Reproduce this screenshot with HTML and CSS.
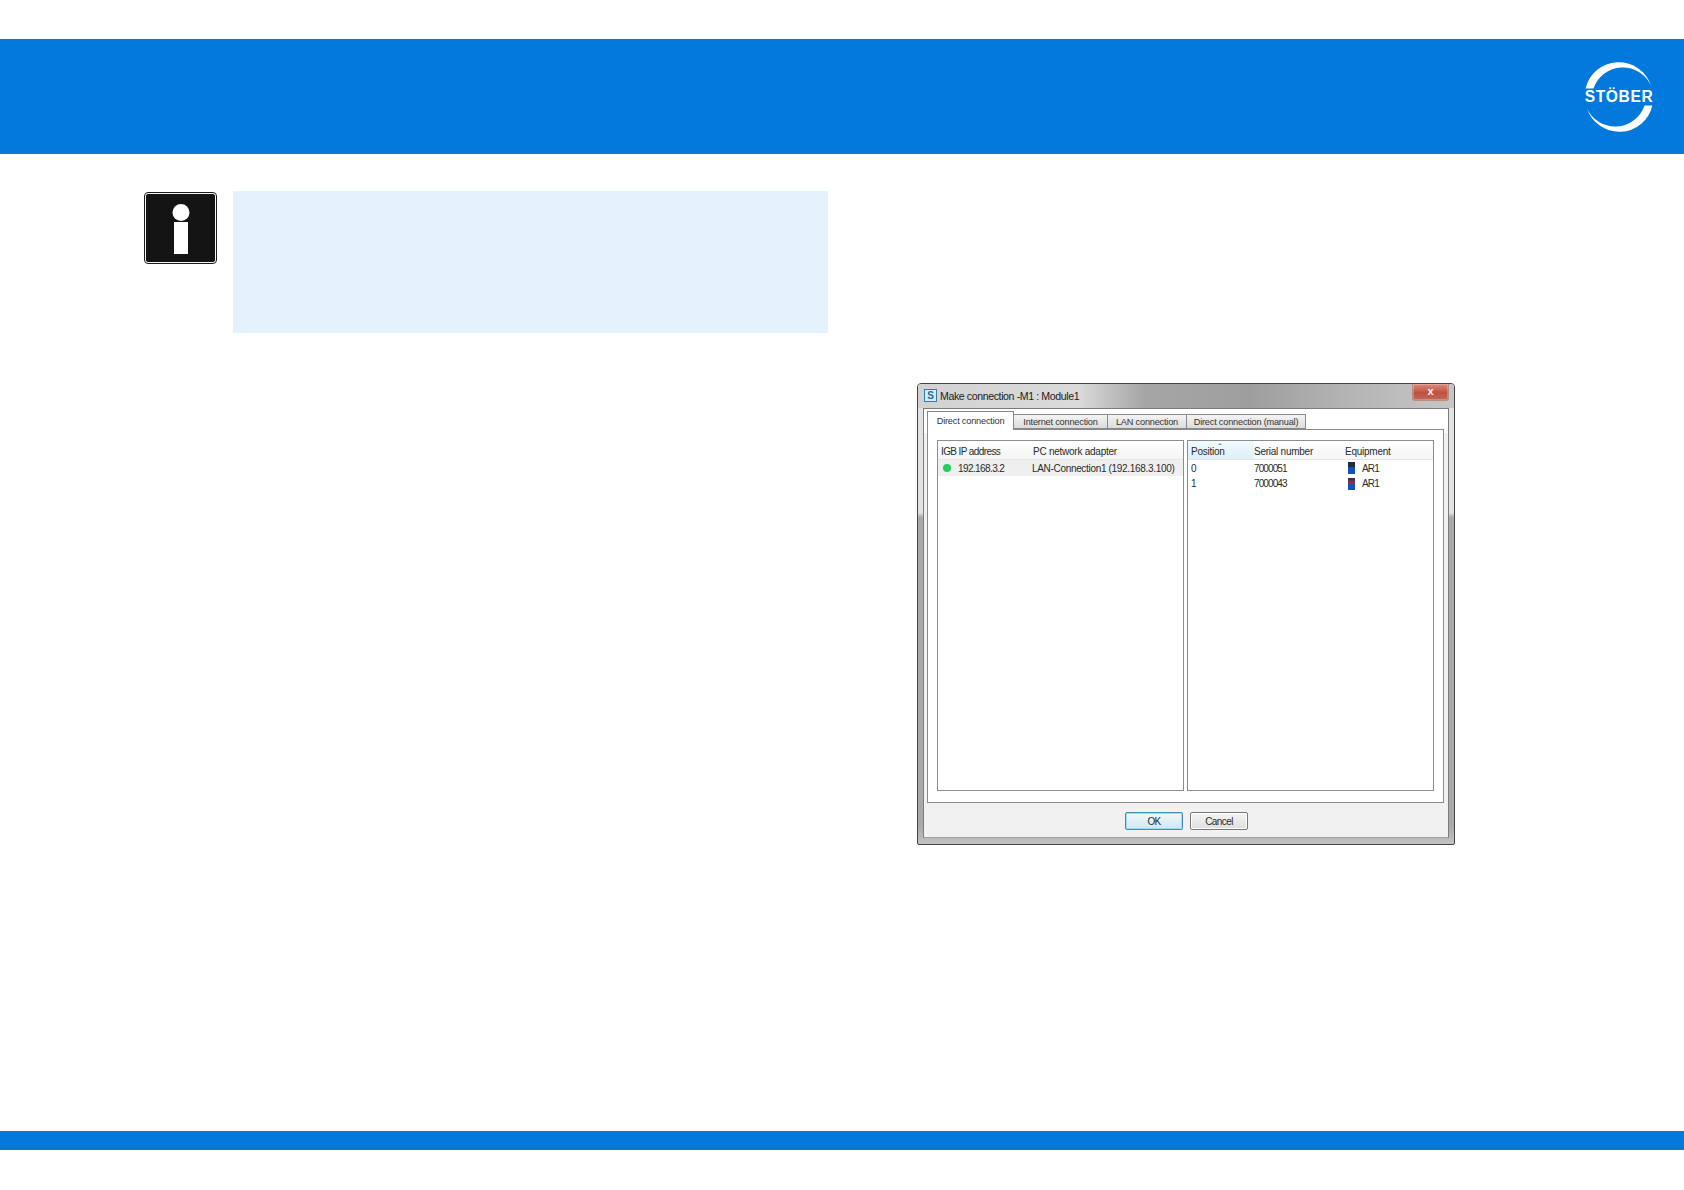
FILE: index.html
```html
<!DOCTYPE html>
<html lang="en">
<head>
<meta charset="utf-8">
<title>Make connection</title>
<link rel="stylesheet" href="styles.css">
</head>
<body>
<div class="page">
  <header class="header">
    <svg class="logo" viewBox="0 0 80 80" width="80" height="80" aria-label="STÖBER logo">
      <path class="logo-arc" d="M6.6 31.5 A34 34 0 0 1 72 28.5 A31 31 0 0 0 14.5 31.5 Z"/>
      <path class="logo-arc" d="M73.4 48.5 A34 34 0 0 1 8 51.5 A31 31 0 0 0 65.5 48.5 Z"/>
      <text class="logo-text" x="40" y="44.5" text-anchor="middle">STÖBER</text>
    </svg>
  </header>
  <main class="main">
    <section class="left">
      <div class="info-icon">
        <svg viewBox="0 0 73 72" width="73" height="72">
          <rect class="info-outer" x="0.5" y="0.5" width="72" height="71" rx="3.5"/>
          <rect class="info-ring" x="2.5" y="2.5" width="68" height="67" rx="1.5"/>
          <circle class="info-glyph" cx="37" cy="20.5" r="8.5"/>
          <rect class="info-glyph" x="30" y="30" width="14" height="32"/>
        </svg>
      </div>
      <div class="note"></div>
    </section>
    <section class="right">
      <div class="dialog">
        <div class="titlebar">
          <span class="app-icon">S</span>
          <span class="title">Make connection -M1 : Module1</span>
          <span class="close">x</span>
        </div>
        <div class="client">
          <div class="tabs">
            <span class="tab tab-active">Direct connection</span>
            <span class="tab tab-internet">Internet connection</span>
            <span class="tab tab-lan">LAN connection</span>
            <span class="tab tab-manual">Direct connection (manual)</span>
          </div>
          <div class="panel">
            <div class="list">
              <div class="row head">
                <span class="c-ip head-ip">IGB IP address</span>
                <span>PC network adapter</span>
              </div>
              <div class="row selected">
                <span class="c-ip"><i class="dot"></i><span class="ip">192.168.3.2</span></span>
                <span class="adapter">LAN-Connection1 (192.168.3.100)</span>
              </div>
            </div>
            <div class="list">
              <div class="row head">
                <span class="c-pos sorted">Position</span>
                <span class="c-serial">Serial number</span>
                <span>Equipment</span>
              </div>
              <div class="row">
                <span class="c-pos">0</span>
                <span class="c-serial digits">7000051</span>
                <span class="equip"><i class="module"></i>AR1</span>
              </div>
              <div class="row row-tight">
                <span class="c-pos">1</span>
                <span class="c-serial digits">7000043</span>
                <span class="equip"><i class="module module-red"></i>AR1</span>
              </div>
            </div>
          </div>
          <div class="buttons">
            <span class="btn btn-default">OK</span>
            <span class="btn">Cancel</span>
          </div>
        </div>
      </div>
    </section>
  </main>
  <footer class="footer"></footer>
</div>
</body>
</html>
```
FILE: styles.css
```css
* { box-sizing: border-box; }
html, body { margin: 0; padding: 0; background: #fff; }
.page {
  width: 1684px;
  height: 1190px;
  display: flex;
  flex-direction: column;
  padding: 39px 0 40px;
  overflow: hidden;
  font-family: "Liberation Sans", Arial, sans-serif;
}
.header {
  height: 115px;
  background: #0078dc;
  display: flex;
  align-items: center;
  justify-content: flex-end;
  padding: 0 25px 0 0;
  flex: none;
}
.logo { display: block; }
.logo-arc { fill: #fff; }
.logo-text {
  fill: #fff;
  font: 700 15.6px "Liberation Sans", sans-serif;
  letter-spacing: .6px;
}
.main { flex: 1; display: flex; padding: 37px 0 0 144px; }
.footer { height: 19px; background: #0078dc; flex: none; }

.left { width: 684px; display: flex; gap: 16px; align-items: flex-start; flex: none; }
.info-icon { width: 73px; height: 72px; margin-top: 1px; flex: none; }
.info-icon svg { display: block; }
.info-outer { fill: #f4f4f4; stroke: #1c1c1c; stroke-width: 1; }
.info-ring { fill: #141414; stroke: #141414; stroke-width: 1; }
.info-glyph { fill: #fff; }
.note { width: 595px; height: 142px; background: #e5f1fc; }

.right { margin-left: 89px; padding-top: 192px; }
.dialog {
  width: 538px;
  height: 462px;
  display: flex;
  flex-direction: column;
  padding: 0 5px 6px;
  border: 1px solid #444;
  border-radius: 4px 4px 2px 2px;
  background: linear-gradient(180deg, #e2e2e2 0, #e2e2e2 28%, #a9a9a9 29%, #a9a9a9 96%, #c2c2c2 100%);
  font-size: 10px;
  color: #2a2a2a;
}
.titlebar {
  height: 24px;
  margin: 0 -5px;
  padding: 0 5px 0 6px;
  display: flex;
  align-items: flex-start;
  gap: 3px;
  flex: none;
  border-radius: 3px 3px 0 0;
  background: linear-gradient(90deg, #d2d2d2 0, #dadada 30%, #a6a6a6 42%, #9e9e9e 62%, #b4b4b4 80%, #c6c6c6 100%);
}
.app-icon {
  width: 13px;
  height: 13px;
  margin-top: 5px;
  border: 1px solid #2a7fb0;
  background: #d6edf8;
  color: #1b6d9c;
  font-size: 10px;
  line-height: 11px;
  text-align: center;
  font-weight: 700;
  flex: none;
}
.title { margin-top: 5px; font-size: 10.6px; line-height: 14px; letter-spacing: -.4px; color: #222; }
.close {
  margin-left: auto;
  width: 37px;
  height: 17px;
  border: 1px solid #b98a80;
  border-top: 0;
  border-radius: 0 0 3px 3px;
  background: linear-gradient(180deg, #d98a7c 0, #c0503f 55%, #c06a5c 100%);
  box-shadow: inset 0 0 0 1px rgba(255, 255, 255, .25);
  color: #f4f4f4;
  font: 700 11px/14px "Liberation Sans", sans-serif;
  text-align: center;
}
.client {
  flex: 1;
  display: flex;
  flex-direction: column;
  background: #f1f1f1;
  border: 1px solid #7c7c7c;
  border-bottom-color: #a0a0a0;
  padding: 2px 4px 0 3px;
  background-image: linear-gradient(#fff 0, #fff 24px, #f1f1f1 24px);
}
.tabs { display: flex; align-items: flex-end; height: 18px; flex: none; position: relative; z-index: 1; }
.tab {
  height: 15px;
  border: 1px solid #8a8a8a;
  border-left: 0;
  background: linear-gradient(180deg, #f4f4f4, #dcdcdc);
  font-size: 9.2px;
  letter-spacing: -.2px;
  line-height: 15px;
  text-align: center;
  color: #333;
  white-space: nowrap;
}
.tab-active {
  width: 87px;
  height: 19px;
  margin-bottom: -1px;
  border-left: 1px solid #8a8a8a;
  border-bottom: 0;
  background: #fff;
  line-height: 18px;
}
.tab-internet { width: 94px; }
.tab-lan { width: 79px; }
.tab-manual { width: 119px; }
.panel {
  height: 374px;
  flex: none;
  display: flex;
  gap: 3px;
  padding: 10px 9px 11px 9px;
  background: #fff;
  border: 1px solid #8a8a8a;
}
.list { width: 247px; border: 1px solid #8d8d8d; background: #fff; }
.row {
  display: flex;
  align-items: center;
  height: 16px;
  padding-left: 3px;
  white-space: nowrap;
}
.row-tight { height: 15px; }
.head {
  height: 19px;
  background: linear-gradient(180deg, #fff, #f4f5f6);
  border-bottom: 1px solid #e4e6e8;
  padding-top: 2px;
  letter-spacing: -.25px;
}
.head-ip { letter-spacing: -.6px; }
.selected { background: #efefef; }
.c-ip { width: 92px; flex: none; display: flex; align-items: center; }
.ip { letter-spacing: -.6px; }
.adapter { letter-spacing: -.32px; margin-left: -1px; }
.dot {
  width: 8px;
  height: 8px;
  margin: 0 7px 0 2px;
  border-radius: 50%;
  background: #21d05a;
}
.c-pos { width: 63px; flex: none; }
.sorted {
  position: relative;
  align-self: stretch;
  margin: -2px 0 0 -3px;
  padding: 2px 0 0 3px;
  width: 66px;
  line-height: 17px;
  background: linear-gradient(180deg, #f2fafd, #dcf0f8);
}
.sorted::before {
  content: "";
  position: absolute;
  top: 2px;
  left: 30px;
  border: 2px solid transparent;
  border-top: 0;
  border-bottom: 2px solid #8b9aa4;
}
.c-serial { width: 91px; flex: none; }
.digits { letter-spacing: -.9px; }
.equip { display: flex; align-items: center; padding-left: 3px; letter-spacing: -.8px; }
.module {
  width: 7px;
  height: 12px;
  margin-right: 7px;
  background: linear-gradient(180deg, #222b44 0, #222b44 40%, #1552b4 45%, #1552b4 100%);
}
.module-red { background: linear-gradient(180deg, #2c2a44 0, #a02a50 40%, #1552b4 50%, #1552b4 100%); }
.buttons {
  flex: 1;
  display: flex;
  justify-content: center;
  align-items: flex-start;
  gap: 7px;
  padding: 9px 0 0 2px;
}
.btn {
  width: 58px;
  height: 18px;
  border: 1px solid #777;
  border-radius: 2px;
  background: linear-gradient(180deg, #f6f6f6, #dedede);
  box-shadow: inset 0 0 0 1px #fdfdfd;
  text-align: center;
  line-height: 17px;
  font-size: 10px;
  letter-spacing: -.6px;
}
.btn-default {
  border-color: #3a8fbb;
  box-shadow: inset 0 0 0 1px #9fdcf2;
  background: linear-gradient(180deg, #f0f8fc, #d2e6f0);
}
```
